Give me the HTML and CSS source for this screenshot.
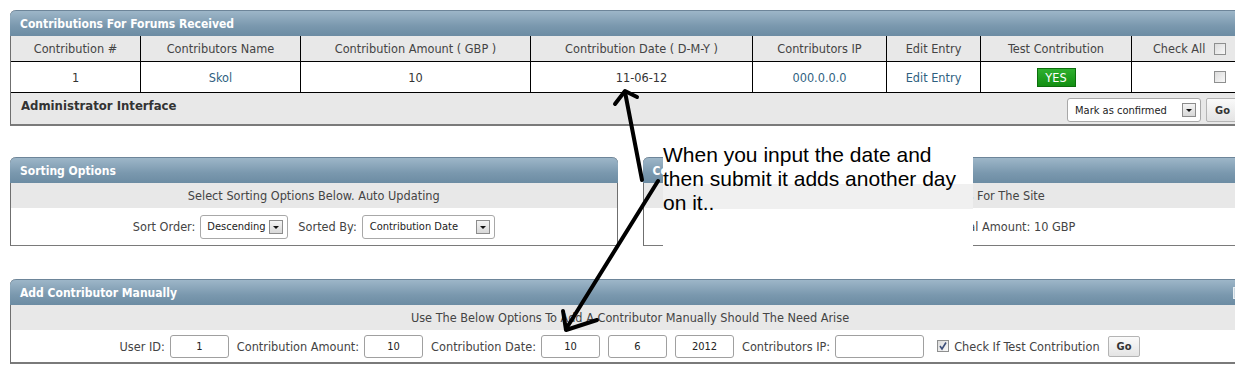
FILE: index.html
```html
<!DOCTYPE html>
<html lang="en">
<head>
    <meta charset="UTF-8" />
    <meta name="viewport" content="width=device-width, initial-scale=1.0" />
    <title>Contributions - Administrator Interface</title>
    <link rel="stylesheet" href="styles.css">
</head>
<body>
    <div class="page">
        <div class="panel">
            <div class="panel-head">Contributions For Forums Received</div>
            <table class="list">
                <thead>
                    <tr>
                        <th class="c1">Contribution #</th>
                        <th class="c2">Contributors Name</th>
                        <th class="c3">Contribution Amount ( GBP )</th>
                        <th class="c4">Contribution Date ( D-M-Y )</th>
                        <th class="c5">Contributors IP</th>
                        <th class="c6">Edit Entry</th>
                        <th class="c7">Test Contribution</th>
                        <th class="c8">Check All <span class="box"></span></th>
                    </tr>
                </thead>
                <tbody>
                    <tr>
                        <td>1</td>
                        <td><a href="#">Skol</a></td>
                        <td>10</td>
                        <td>11-06-12</td>
                        <td><a href="#">000.0.0.0</a></td>
                        <td><a href="#">Edit Entry</a></td>
                        <td><span class="yes">YES</span></td>
                        <td class="c8"><span class="box"></span></td>
                    </tr>
                </tbody>
            </table>
            <div class="admin-bar">
                <b>Administrator Interface</b>
                <div class="admin-tools">
                    <span class="select mark">Mark as confirmed <span class="drop"></span></span>
                    <button class="go">Go</button>
                </div>
            </div>
        </div>

        <div class="split">
            <div class="panel half">
                <div class="panel-head">Sorting Options</div>
                <div class="panel-sub">Select Sorting Options Below. Auto Updating</div>
                <div class="panel-row tall">
                    <label>Sort Order:</label>
                    <span class="select order">Descending <span class="drop"></span></span>
                    <label>Sorted By:</label>
                    <span class="select sortby">Contribution Date <span class="drop"></span></span>
                </div>
            </div>
            <div class="panel half">
                <div class="panel-head">Contribution Statistics</div>
                <div class="panel-sub">Contribution Statistics For The Site</div>
                <div class="panel-row tall">Total Contributions: 1 &nbsp;&nbsp; Total Amount: 10 GBP</div>
            </div>
        </div>

        <div class="panel add">
            <div class="panel-head">Add Contributor Manually <span class="toggle"></span></div>
            <div class="panel-sub">Use The Below Options To Add A Contributor Manually Should The Need Arise</div>
            <div class="panel-row">
                <label>User ID:</label>
                <input class="field" value="1">
                <label>Contribution Amount:</label>
                <input class="field" value="10">
                <label>Contribution Date:</label>
                <input class="field" value="10">
                <input class="field" value="6">
                <input class="field" value="2012">
                <label>Contributors IP:</label>
                <input class="field ip" value="">
                <span class="box checked"><svg viewBox="0 0 10 10" width="10" height="10"><path d="M2 5 L4 8 L8 1.5" fill="none" stroke="#3d4f7a" stroke-width="1.6"/></svg></span>
                <label class="check-label">Check If Test Contribution</label>
                <button class="go small">Go</button>
            </div>
        </div>

        <div class="note">When you input the date and<br>then submit it adds another day<br>on it..</div>

        <svg class="arrows" width="1235" height="386" viewBox="0 0 1235 386">
            <g fill="none" stroke="#000" stroke-width="4" stroke-linecap="round" stroke-linejoin="round">
                <path d="M642 180 L625 92"/>
                <path d="M615 104 L625 91 L637 97"/>
                <path d="M658 181 L566 329"/>
                <path d="M563 311 L566 330 L597 320"/>
            </g>
        </svg>
    </div>
</body>
</html>
```

FILE: styles.css
```css
html, body {
    margin: 0;
    overflow: hidden;
    background: #fff;
}
body {
    font-family: "DejaVu Sans Condensed", "DejaVu Sans", sans-serif;
    font-size: 12.6px;
    color: #333;
}
.page {
    position: relative;
    width: 1240px;
    padding: 10px 0 0 10px;
}
.panel {
    background: #fff;
    border-left: 1px solid #6f6f6f;
    border-right: 1px solid #6f6f6f;
    border-bottom: 2px solid #7a7a7a;
    border-radius: 6px 6px 0 0;
}
.panel-head {
    display: flex;
    align-items: center;
    height: 25px;
    padding-left: 10px;
    margin: 0 -1px;
    border-top: 1px solid #6d8599;
    border-radius: 6px 6px 0 0;
    background: linear-gradient(#9db6c8, #7a98ae 60%, #6c8ca3);
    color: #fff;
    font-weight: bold;
    font-size: 12px;
}
.toggle {
    width: 10px;
    height: 10px;
    margin-left: auto;
    margin-right: 5px;
    border: 1px solid #e8eef2;
    background: #c9d6df;
}
.panel-sub {
    height: 25px;
    line-height: 26px;
    text-align: center;
    background: #e8e8e8;
    color: #444;
}
.panel-row {
    display: flex;
    align-items: center;
    justify-content: center;
    height: 32px;
    color: #444;
}
.panel-row.tall {
    height: 37px;
}

/* contributions table */
.list {
    width: 100%;
    border-collapse: separate;
    border-spacing: 0;
    table-layout: fixed;
}
.list th, .list td {
    box-sizing: border-box;
    padding: 0;
    border-right: 1px solid #000;
    border-bottom: 1px solid #000;
}
.list th {
    height: 26px;
    font-weight: normal;
    color: #444;
    background: #e8e8e8;
}
.list td {
    height: 31px;
    text-align: center;
    background: #fff;
}
.list th:last-child, .list td:last-child {
    border-right: none;
}
.list .c1 { width: 130px; }
.list .c2 { width: 160px; }
.list .c3 { width: 230px; }
.list .c4 { width: 222px; }
.list .c5 { width: 134px; }
.list .c6 { width: 94px; }
.list .c7 { width: 151px; }
.list .c8 {
    text-align: right;
    padding-right: 23px;
}
.list th.c8 .box {
    margin-left: 5px;
    vertical-align: -2px;
}
.list td.c8 .box {
    vertical-align: -1px;
}
a {
    color: #2f5f7f;
    text-decoration: none;
}
.yes {
    display: inline-block;
    width: 37px;
    height: 17px;
    line-height: 17px;
    color: #fff;
    background: linear-gradient(#2fb02f, #128f12);
    border: 1px solid #0d6e0d;
}
.box {
    display: inline-flex;
    align-items: center;
    justify-content: center;
    box-sizing: border-box;
    width: 12px;
    height: 12px;
    border: 1px solid #8e8f8f;
    background: linear-gradient(135deg, #dcdcdc, #f8f8f8);
}
.box.checked {
    margin-left: 13px;
    margin-right: 5px;
}

.admin-bar {
    display: flex;
    justify-content: space-between;
    height: 31px;
    background: #e8e8e8;
}
.admin-bar b {
    padding: 5px 0 0 10px;
    font-size: 13px;
    color: #333;
}
.admin-tools {
    display: flex;
    align-items: flex-start;
    padding-top: 5px;
    padding-right: 10px;
}

/* fake select boxes */
.select {
    display: inline-flex;
    align-items: center;
    justify-content: space-between;
    box-sizing: border-box;
    height: 24px;
    padding: 0 4px 0 7px;
    background: #fff;
    border: 1px solid #a8a8a8;
    border-radius: 3px;
    font-size: 11px;
    color: #222;
}
.select.mark { width: 134px; }
.select.order { width: 88px; padding-left: 6px; }
.select.sortby { width: 133px; }
.drop {
    position: relative;
    box-sizing: border-box;
    width: 14px;
    height: 14px;
    border: 1px solid #8c8c8c;
    background: linear-gradient(#f4f4f4, #d8d8d8);
}
.drop::after {
    content: "";
    position: absolute;
    left: 3px;
    top: 5px;
    border-left: 3px solid transparent;
    border-right: 3px solid transparent;
    border-top: 3px solid #111;
}
.go {
    box-sizing: border-box;
    height: 24px;
    margin-left: 5px;
    padding: 0 8px;
    font-family: inherit;
    font-size: 11px;
    font-weight: bold;
    color: #333;
    background: linear-gradient(#fafafa, #e4e4e4);
    border: 1px solid #b4b4b4;
    border-radius: 2px;
}
.go.small {
    height: 21px;
    margin-left: 8px;
}

.split {
    display: flex;
    gap: 25px;
    margin-top: 31px;
}
.half {
    flex: 1;
    border-bottom-width: 1px;
}
.add {
    margin-top: 33px;
}
label {
    margin-right: 5px;
}
.select + label {
    margin-left: 10px;
}
.field {
    box-sizing: border-box;
    width: 59px;
    height: 23px;
    margin-right: 8px;
    padding: 0;
    text-align: center;
    font-family: inherit;
    font-size: 11px;
    color: #222;
    border: 1px solid #a0a0a0;
    border-radius: 3px;
}
.field.ip {
    width: 89px;
    margin-right: 0;
}
.check-label {
    margin-right: 0;
}

/* screenshot annotation */
.note {
    position: absolute;
    left: 663px;
    top: 143px;
    width: 310px;
    height: 105px;
    background: linear-gradient(#fff 41px, #f0f0f0 41px, #f0f0f0 66px, #fff 66px);
    font-family: "Liberation Sans", Arial, sans-serif;
    font-size: 21px;
    line-height: 24px;
    color: #000;
}
.arrows {
    position: absolute;
    left: 0;
    top: 0;
    pointer-events: none;
}
```
